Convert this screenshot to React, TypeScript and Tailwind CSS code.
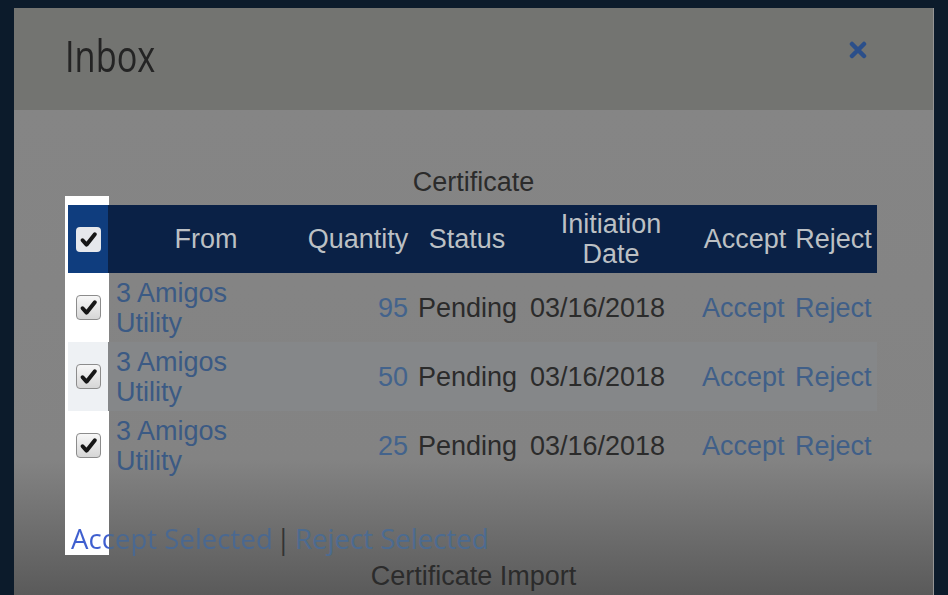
import React from "react";

const ROWS = [
  { qty: 95, striped: false },
  { qty: 50, striped: true },
  { qty: 25, striped: false },
];

function CheckMark() {
  return (
    <svg viewBox="0 0 24 24" className="w-[19px] h-[19px]">
      <path d="M4.5 13 L9.5 18.5 L20 5.5" fill="none" stroke="#161616" strokeWidth="5" strokeLinecap="round" strokeLinejoin="round" />
    </svg>
  );
}

function CheckBox({ head }: { head?: boolean }) {
  return (
    <div
      className={`w-[25px] h-[25px] rounded-[4px] flex items-center justify-center ${
        head
          ? "bg-[#e6e8ec]"
          : "border border-[#8c8c8c] bg-[linear-gradient(to_bottom,#f7f7f7,#d6d6d6)]"
      }`}
    >
      <CheckMark />
    </div>
  );
}

export default function App() {
  return (
    <div className="w-[948px] h-[595px] overflow-hidden bg-[#0c1b2b] pt-[8px] px-[14px] flex flex-col">
      <div className="flex-1 flex flex-col border-r border-[#959595]">
        {/* Header */}
        <div className="h-[102px] bg-[#737471] flex justify-between items-start pl-[51px] pr-[66px]">
          <h1 className="pt-[25px] text-[44px] leading-[44px] font-medium text-[#242424] font-['Open_Sans',sans-serif] origin-left scale-x-[0.78]">
            Inbox
          </h1>
          <svg viewBox="0 0 18 18" className="mt-[33px] w-[18px] h-[18px]">
            <path d="M3 3 L15 15 M15 3 L3 15" stroke="#2b4f8a" strokeWidth="4.5" strokeLinecap="round" />
          </svg>
        </div>

        {/* Body */}
        <div className="relative flex-1 bg-[linear-gradient(to_bottom,#858585_0px,#838383_350px,#5a5a5a_485px)] font-['Liberation_Sans',Arial,sans-serif] text-[27px] leading-[30px] text-[#2b2b2b]">
          {/* spotlight */}
          <div className="absolute left-[51px] top-[86px] w-[44px] h-[359px] bg-white" />

          <div className="pt-[57px] text-center">Certificate</div>

          <div className="relative z-10 mt-[8px] ml-[54px] w-[809px]">
            <div className="grid grid-cols-[40px_196px_108px_110px_178px_90px_87px] h-[68px] bg-[#0a2146] text-[#bcc0c4] items-center text-center">
              <div className="h-full bg-[#0f3d7e] flex items-center justify-center">
                <CheckBox head />
              </div>
              <div>From</div>
              <div>Quantity</div>
              <div>Status</div>
              <div>
                Initiation
                <br />
                Date
              </div>
              <div>Accept</div>
              <div>Reject</div>
            </div>

            {ROWS.map((row) => (
              <div
                key={row.qty}
                className={`grid grid-cols-[40px_196px_108px_110px_178px_90px_87px] h-[69px] items-center ${
                  row.striped ? "bg-[#858789]" : ""
                }`}
              >
                <div className={`h-full flex items-center justify-center ${row.striped ? "bg-[#eef1f4]" : "bg-white"}`}>
                  <CheckBox />
                </div>
                <div className="pl-[8px] text-[#3b5a84]">
                  3 Amigos
                  <br />
                  Utility
                </div>
                <div className="pr-[4px] text-right text-[#43638c]">{row.qty}</div>
                <div className="pl-[6px]">Pending</div>
                <div className="pl-[8px]">03/16/2018</div>
                <div className="pl-[2px] text-[#405f88]">Accept</div>
                <div className="pl-[5px] text-[#405f88]">Reject</div>
              </div>
            ))}
          </div>

          <div className="relative z-10 mt-[43px] ml-[57px] text-[27.6px] font-['Open_Sans',sans-serif]">
            <span className="bg-clip-text text-transparent bg-[linear-gradient(to_right,#3f5fcf_38px,#4a6890_38px)]">
              Accept Selected
            </span>
            <span className="ml-[3px] text-[#333]">|</span>
            <span className="ml-[4px] text-[#4c6b90]">Reject Selected</span>
          </div>

          <div className="mt-[8px] text-center">Certificate Import</div>
        </div>
      </div>
    </div>
  );
}
